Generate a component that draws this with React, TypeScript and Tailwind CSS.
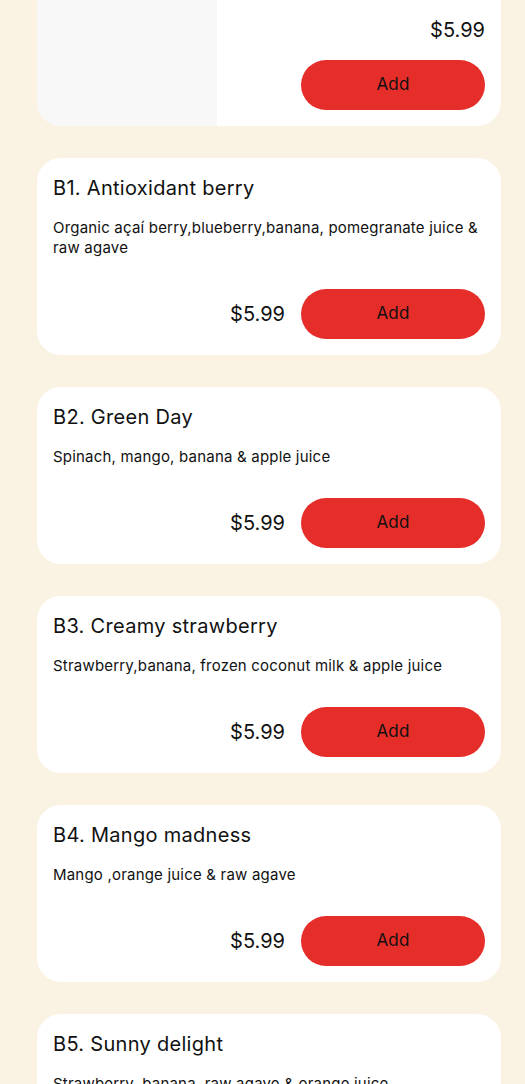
const items = [
  {
    name: "B1. Antioxidant berry",
    desc: "Organic açaí berry,blueberry,banana, pomegranate juice & raw agave",
    price: "$5.99",
  },
  { name: "B2. Green Day", desc: "Spinach, mango, banana & apple juice", price: "$5.99" },
  {
    name: "B3. Creamy strawberry",
    desc: "Strawberry,banana, frozen coconut milk & apple juice",
    price: "$5.99",
  },
  { name: "B4. Mango madness", desc: "Mango ,orange juice & raw agave", price: "$5.99" },
  {
    name: "B5. Sunny delight",
    desc: "Strawberry, banana, raw agave & orange juice",
    price: "$5.99",
  },
];

function AddButton() {
  return (
    <button className="w-[184px] h-[50px] rounded-full bg-[#e52e2a] text-[#111] text-[17px] tracking-[0.2px]">
      Add
    </button>
  );
}

export default function App() {
  return (
    <div
      className="min-h-screen bg-[#faf3e3] pl-[37px] pr-[24px] pb-10 text-[#111]"
      style={{ fontFamily: "Inter, 'Noto Sans', sans-serif" }}
    >
      <div className="flex flex-col gap-8">
        {/* card scrolled off the top */}
        <div className="flex bg-white rounded-b-[24px] overflow-hidden h-[126px]">
          <div className="w-[180px] bg-[#f8f8f8]" />
          <div className="flex-1 flex flex-col items-end px-4 pt-4 gap-4">
            <div className="text-[20px] leading-7">$5.99</div>
            <AddButton />
          </div>
        </div>

        {items.map((item, i) => (
          <div key={i} className="bg-white rounded-[24px] p-4">
            <h3 className="text-[20px] leading-7 tracking-[0.3px]">{item.name}</h3>
            <p className="mt-4 text-[15px] leading-5 tracking-[0.2px]">{item.desc}</p>
            <div className="mt-[31px] flex items-center justify-end gap-4">
              <span className="text-[20px] leading-7">{item.price}</span>
              <AddButton />
            </div>
          </div>
        ))}
      </div>
    </div>
  );
}
